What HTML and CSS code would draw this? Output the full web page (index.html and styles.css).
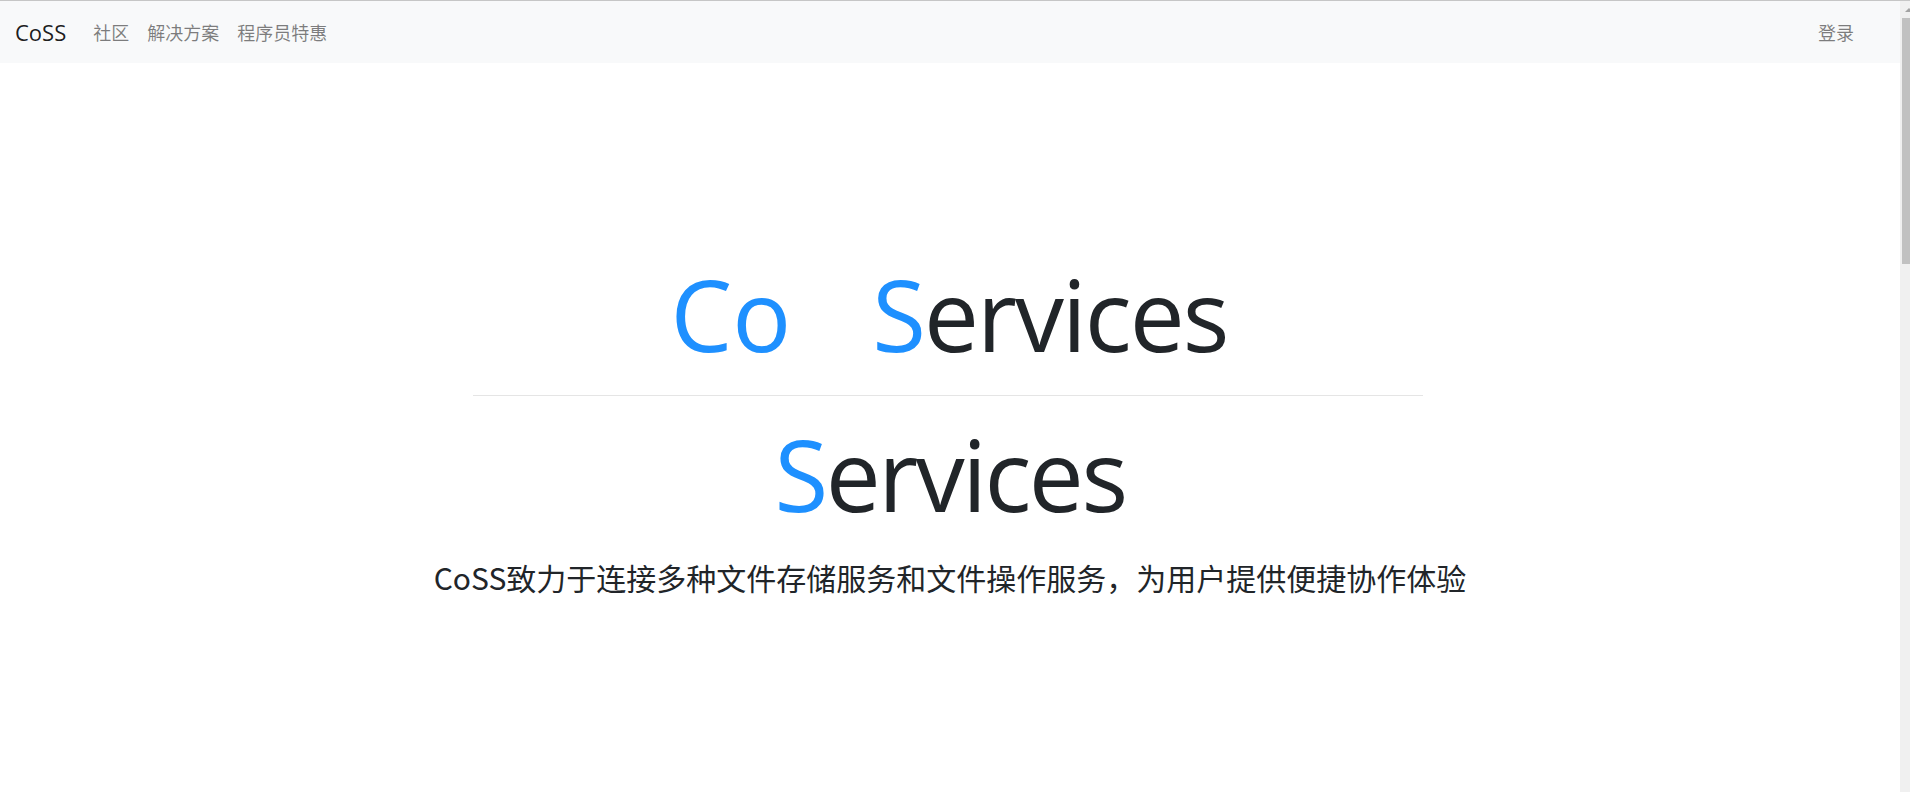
FILE: index.html
```html
<!DOCTYPE html>
<html lang="zh-CN">
<head>
<meta charset="utf-8">
<title>CoSS</title>
<link rel="stylesheet" href="styles.css">
</head>
<body>
<div class="window">
  <div class="topline"></div>
  <div class="frame">
    <div class="page">
      <nav class="navbar">
        <a class="brand" href="#">CoSS</a>
        <ul class="nav">
          <li><a class="nav-link" href="#">社区</a></li>
          <li><a class="nav-link" href="#">解决方案</a></li>
          <li><a class="nav-link" href="#">程序员特惠</a></li>
        </ul>
        <ul class="nav nav-right">
          <li><a class="nav-link" href="#">登录</a></li>
        </ul>
      </nav>
      <main class="hero">
        <h1 class="display first"><span class="accent co">Co</span><span class="accent">S</span>ervices</h1>
        <hr class="divider">
        <h1 class="display second"><span class="accent">S</span>ervices</h1>
        <p class="lead">CoSS致力于连接多种文件存储服务和文件操作服务，为用户提供便捷协作体验</p>
      </main>
    </div>
    <div class="scrollbar">
      <div class="arrow"></div>
      <div class="thumb"></div>
    </div>
  </div>
</div>
</body>
</html>
```
FILE: styles.css
```css
html, body {
  margin: 0;
  padding: 0;
  background: #ffffff;
}

body {
  font-family: "Open Sans", "Noto Sans CJK SC", sans-serif;
  color: #212529;
}

.window {
  height: 100vh;
  display: flex;
  flex-direction: column;
  overflow: hidden;
}

.topline {
  height: 1px;
  background: #c6c6c6;
  flex: none;
}

.frame {
  flex: 1;
  display: flex;
  min-height: 0;
}

.page {
  flex: 1;
  min-width: 0;
  display: flex;
  flex-direction: column;
}

.navbar {
  height: 62px;
  background: #f8f9fa;
  display: flex;
  align-items: center;
  padding: 0 37px 0 15px;
  box-sizing: border-box;
}

.brand {
  font-family: "Open Sans", sans-serif;
  font-size: 22px;
  color: rgba(0, 0, 0, 0.9);
  text-decoration: none;
  margin-right: 18px;
  line-height: 1;
}

.nav {
  list-style: none;
  margin: 0;
  padding: 0;
  display: flex;
}

.nav-right {
  margin-left: auto;
}

.nav-link {
  display: block;
  font-family: "Noto Sans CJK SC", sans-serif;
  font-size: 18px;
  line-height: 26px;
  padding: 0 9px;
  color: rgba(0, 0, 0, 0.5);
  text-decoration: none;
}

.hero {
  display: flex;
  flex-direction: column;
  align-items: center;
  padding-top: 192px;
}

.display {
  margin: 0;
  font-family: "Open Sans", sans-serif;
  font-weight: 400;
  font-size: 98px;
  line-height: 118px;
  letter-spacing: -2px;
  color: #212529;
  white-space: nowrap;
}

.first {
  margin-right: 2px;
}

.second {
  letter-spacing: -2.5px;
}

.accent {
  color: #1e90ff;
}

.co {
  letter-spacing: 0;
  margin-right: 81px;
}

.divider {
  width: 950px;
  margin: 22px 4px 19px 0;
  border: 0;
  border-top: 1px solid rgba(0, 0, 0, 0.1);
}

.lead {
  margin: 22px 0 0;
  font-family: "Noto Sans CJK SC", sans-serif;
  font-size: 30px;
  line-height: 45px;
  color: #212529;
}

.scrollbar {
  width: 10px;
  flex: none;
  background: #f0f0f0;
  overflow: hidden;
  display: flex;
  flex-direction: column;
}

.arrow {
  width: 0;
  height: 0;
  margin: 7px 0 0 5px;
  border-left: 4px solid transparent;
  border-right: 4px solid transparent;
  border-bottom: 4px solid #a3a3a3;
}

.thumb {
  margin: 6px 0 0 2px;
  width: 13px;
  height: 246px;
  background: #c1c1c1;
}
```
